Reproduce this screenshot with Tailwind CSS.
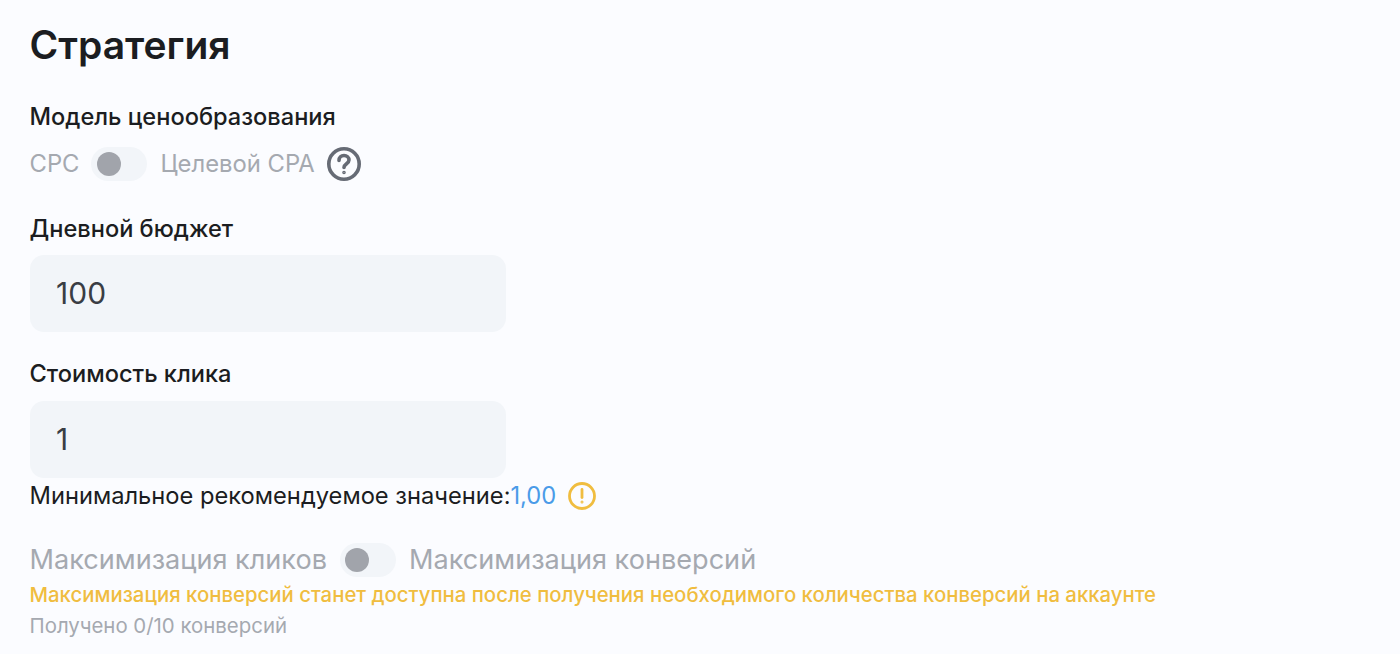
<!DOCTYPE html>
<html lang="ru">
<head>
    <meta charset="UTF-8">
    <title>Стратегия</title>
    <script src="https://cdn.jsdelivr.net/npm/@tailwindcss/browser@4"></script>
</head>
<body class="h-[654px] overflow-hidden bg-[#fbfcff] font-['Inter',sans-serif] text-[#1b1d21]">
    <main class="pl-[29.5px] pt-[21px]">
        <h1 class="text-[39px] leading-[48px] font-semibold">Стратегия</h1>

        <div class="mt-[32px] text-[23.6px] leading-[32px] font-medium">Модель ценообразования</div>
        <div class="mt-[14px] flex items-center h-[34px] text-[23.8px] text-[#a5a9b0]">
            <span>CPC</span>
            <span class="ml-[12px] flex items-center w-[56px] h-[34px] rounded-full bg-[#f2f5f9] pl-[6px]">
                <span class="w-[24px] h-[24px] rounded-full bg-[#a1a4ab]"></span>
            </span>
            <span class="ml-[13px]">Целевой CPA</span>
            <svg class="ml-[11px]" width="36" height="36" viewBox="0 0 36 36" fill="none" stroke="#666b75" stroke-width="3.6" stroke-linecap="round">
                <circle cx="18" cy="18" r="15.2"/>
                <path d="M13 14.5c0-3 2.2-5 5-5s5 2 5 4.6c0 3.6-5 3.6-5 7.4"/>
                <circle cx="18" cy="26.5" r="0.6" fill="#666b75" stroke-width="2.4"/>
            </svg>
        </div>

        <div class="mt-[32px] text-[23.6px] leading-[32px] font-medium">Дневной бюджет</div>
        <div class="mt-[10px] ml-[0.5px] w-[476px] h-[77px] rounded-[14px] bg-[#f2f5f9] pl-[26px] flex items-center text-[30px] text-[#3a3d44]">100</div>

        <div class="mt-[26px] text-[23.6px] leading-[32px] font-medium">Стоимость клика</div>
        <div class="mt-[11px] ml-[0.5px] w-[476px] h-[77px] rounded-[14px] bg-[#f2f5f9] pl-[26px] flex items-center text-[30px] text-[#3a3d44]">1</div>

        <div class="mt-[1px] flex items-center h-[34px] text-[23.7px]">
            <span>Минимальное рекомендуемое значение:</span><span class="text-[#4a9be8]">1,00</span>
            <svg class="ml-[11px]" width="30" height="30" viewBox="0 0 30 30" fill="none" stroke="#f0bd3f" stroke-width="2.8" stroke-linecap="round">
                <circle cx="15" cy="15" r="12.5"/>
                <path d="M15 8.5v8"/>
                <circle cx="15" cy="21" r="0.5" fill="#f0bd3f" stroke-width="2"/>
            </svg>
        </div>

        <div class="mt-[30px] flex items-center h-[34px] text-[27.1px] text-[#a5a9b0]">
            <span>Максимизация кликов</span>
            <span class="ml-[13px] flex items-center w-[56px] h-[34px] rounded-full bg-[#f2f5f9] pl-[5px]">
                <span class="w-[24px] h-[24px] rounded-full bg-[#a1a4ab]"></span>
            </span>
            <span class="ml-[13px]">Максимизация конверсий</span>
        </div>
        <div class="mt-[3px] text-[20.35px] leading-[30px] font-medium text-[#f0bd3f] whitespace-nowrap">Максимизация конверсий станет доступна после получения необходимого количества конверсий на аккаунте</div>
        <div class="mt-[1px] text-[20.4px] leading-[30px] text-[#a5a9b0]">Получено 0/10 конверсий</div>
    </main>
</body>
</html>
